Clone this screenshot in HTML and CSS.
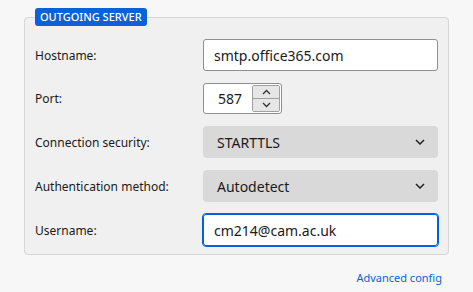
FILE: index.html
```html
<!DOCTYPE html>
<html>
  <head>
    <meta name="viewport" content="width=device-width, initial-scale=1" />
    <link rel="stylesheet" href="styles.css">
  </head>
  <body>
    <!-- Outgoing server settings -->
    <fieldset class="server">
      <legend class="server-title">OUTGOING SERVER</legend>

      <div class="grid">
        <label class="label" for="hostname">Hostname:</label>
        <input class="field" type="text" id="hostname" value="smtp.office365.com" />

        <label class="label" for="port">Port:</label>
        <div class="port">
          <span class="port-value">587</span>
          <div class="spin">
            <span class="spin-btn">
              <svg width="9" height="6" viewBox="0 0 9 6"><polyline points="1,5 4.5,1.5 8,5" fill="none" stroke="#333" stroke-width="1.3"/></svg>
            </span>
            <span class="spin-btn">
              <svg width="9" height="6" viewBox="0 0 9 6"><polyline points="1,1 4.5,4.5 8,1" fill="none" stroke="#333" stroke-width="1.3"/></svg>
            </span>
          </div>
        </div>

        <label class="label">Connection security:</label>
        <div class="select">
          <span>STARTTLS</span>
          <svg width="10" height="6" viewBox="0 0 10 6"><polyline points="1,1 5,5 9,1" fill="none" stroke="#222" stroke-width="1.5"/></svg>
        </div>

        <label class="label">Authentication method:</label>
        <div class="select">
          <span>Autodetect</span>
          <svg width="10" height="6" viewBox="0 0 10 6"><polyline points="1,1 5,5 9,1" fill="none" stroke="#222" stroke-width="1.5"/></svg>
        </div>

        <label class="label" for="username">Username:</label>
        <input class="field focused" type="text" id="username" value="cm214@cam.ac.uk" />
      </div>
    </fieldset>

    <div class="actions">
      <a href="#" class="link">Advanced config</a>
    </div>
  </body>
</html>
```

FILE: styles.css
```css
body {
  font-family: "Noto Sans", "Open Sans", sans-serif;
  margin: 0;
  padding: 8px 24px;
  background-color: #f7f7f7;
  color: #1a1a1a;
}

.server {
  min-width: 0;
  margin: 0;
  padding: 13px 10px 8px;
  border: 1px solid #d6d6d6;
  border-radius: 4px;
  background-color: #f0f0f0;
}

.server-title {
  background-color: #0a61d8;
  color: white;
  font-size: 11px;
  font-weight: 500;
  line-height: 18px;
  padding: 0 5px;
  border-radius: 3px;
}

.grid {
  display: grid;
  grid-template-columns: 168px minmax(0, 1fr);
  row-gap: 12px;
  align-items: center;
}

.label {
  font-size: 12px;
}

.field {
  box-sizing: border-box;
  width: 100%;
  min-width: 0;
  height: 32px;
  margin: 0;
  padding: 0 10px;
  border: 1px solid #8f8f8f;
  border-radius: 3px;
  background-color: white;
  font-family: inherit;
  font-size: 14px;
  color: #1a1a1a;
}

.focused {
  border-color: #0060df;
  outline: 1px solid #0060df;
}

.port {
  box-sizing: border-box;
  display: flex;
  align-items: center;
  width: 79px;
  height: 31px;
  border: 1px solid #8f8f8f;
  border-radius: 3px;
  background-color: white;
  font-size: 14px;
}

.port-value {
  flex: 1;
  text-align: right;
  padding-right: 10px;
}

.spin {
  display: flex;
  flex-direction: column;
  align-self: stretch;
  width: 26px;
  margin: 1px 1px 1px 0;
  border: 1px solid #a0a0a0;
  border-radius: 2px;
}

.spin-btn {
  flex: 1;
  display: flex;
  justify-content: center;
  align-items: center;
  background-color: #e6e6e6;
}

.spin-btn + .spin-btn {
  border-top: 1px solid #a0a0a0;
}

.select {
  box-sizing: border-box;
  display: flex;
  justify-content: space-between;
  align-items: center;
  height: 32px;
  padding: 0 13px 0 14px;
  border-radius: 4px;
  background-color: #d9d9d9;
  font-size: 14px;
}

.actions {
  margin-top: 10px;
  padding-right: 7px;
  text-align: right;
}

.link {
  color: #0a61d8;
  font-size: 11px;
  text-decoration: none;
}
```
